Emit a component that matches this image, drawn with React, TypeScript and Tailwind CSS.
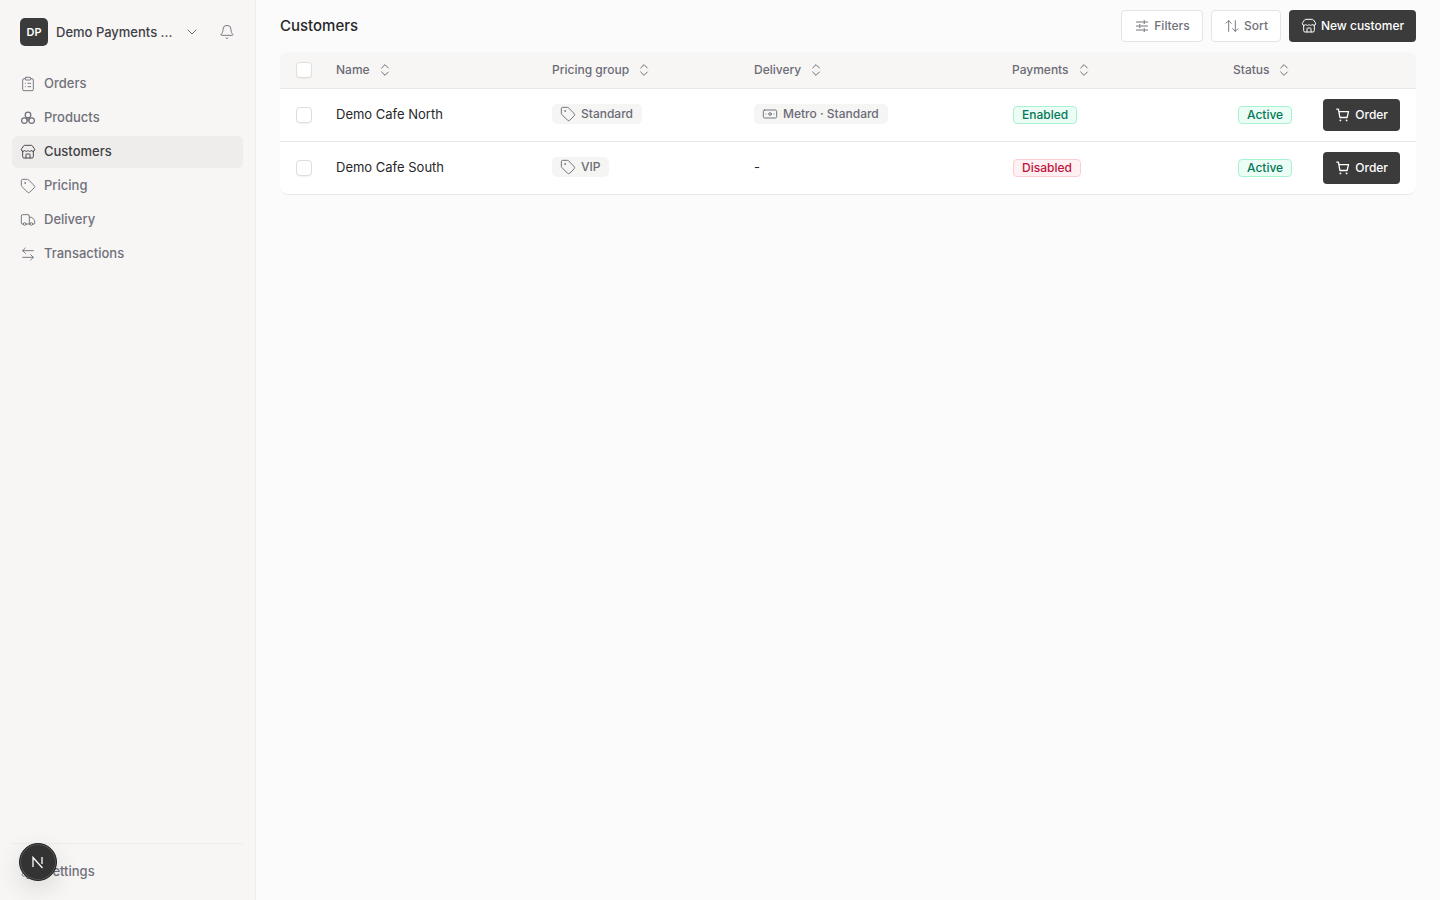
import React from "react";
import { ClipboardList, Store, Tag, Truck, ArrowLeftRight, Bell, ChevronDown, ArrowUpDown, Banknote, ChevronsUpDown, Settings } from "lucide-react";

function Products({ className }: { className?: string }) {
  return (
    <svg viewBox="0 0 16 16" fill="none" stroke="currentColor" strokeWidth="1.25" className={className}>
      <circle cx="8" cy="5" r="2.8" />
      <circle cx="4.4" cy="10.6" r="2.8" />
      <circle cx="11.6" cy="10.6" r="2.8" />
      <circle cx="8" cy="9" r="1.3" />
    </svg>
  );
}

function Cart() {
  return (
    <svg viewBox="0 0 16 16" fill="none" stroke="currentColor" strokeWidth="1.3" strokeLinecap="round" strokeLinejoin="round" className="w-4 h-4">
      <path d="M1.8 2.2h1.6l1.5 8.3h7.2l1.4-5.8H3.9" />
      <path d="M5.4 13.4h.01M11.6 13.4h.01" strokeWidth="1.8" />
    </svg>
  );
}

function Sliders() {
  return (
    <svg viewBox="0 0 16 16" fill="none" stroke="currentColor" strokeWidth="1.2" strokeLinecap="round" className="w-4 h-4">
      <path d="M2.5 4h6.5M11.5 4h2M2.5 8h2M7 8h6.5M2.5 12h6.5M11.5 12h2" />
      <path d="M10.2 2.6v2.8M5.8 6.6v2.8M10.2 10.6v2.8" />
    </svg>
  );
}

const nav = [
  { label: "Orders", Icon: ClipboardList },
  { label: "Products", Icon: Products },
  { label: "Customers", Icon: Store, active: true },
  { label: "Pricing", Icon: Tag },
  { label: "Delivery", Icon: Truck },
  { label: "Transactions", Icon: ArrowLeftRight },
];

const cols = "grid grid-cols-[56px_216px_202px_258px_221px_1fr] items-center";

function Sortable({ children }: { children: React.ReactNode }) {
  return (
    <div className="flex items-center gap-[6px] text-xs font-medium text-[#6b6b76]">
      <span>{children}</span>
      <ChevronsUpDown className="w-4 h-4 ml-px" strokeWidth={1.5} />
    </div>
  );
}

function Check() {
  return <div className="ml-4 w-4 h-4 rounded-[4px] border border-[#dededc] bg-white shadow-[0_1px_1px_rgba(0,0,0,0.05)]" />;
}

function Chip({ icon, children }: { icon: React.ReactNode; children: React.ReactNode }) {
  return (
    <span className="inline-flex items-center gap-[5px] h-5 -mt-[2px] pl-2 pr-[9px] rounded-[5px] bg-[#f5f5f4] text-xs font-medium text-[#6b6b76]">
      {icon}
      {children}
    </span>
  );
}

function Badge({ tone, children }: { tone: "green" | "red"; children: React.ReactNode }) {
  const cls = tone === "green"
    ? "bg-[#ecfdf5] border-[#a7f3d0] text-[#047857]"
    : "bg-[#fff1f2] border-[#fecdd3] text-[#be123c]";
  return <span className={`inline-flex items-center h-[18px] px-2 rounded-[4px] border text-xs font-medium ${cls}`}>{children}</span>;
}

function OrderButton() {
  return (
    <button className="flex items-center gap-1 h-8 px-3 rounded-[4px] bg-[#3b3b3b] text-white text-xs font-medium">
      <Cart />
      Order
    </button>
  );
}

function Row({ name, group, delivery, payment, last }: { name: string; group: string; delivery?: string; payment: "Enabled" | "Disabled"; last?: boolean }) {
  return (
    <div className={`${cols} h-[53px] bg-white border-b border-[#e8e8e6] ${last ? "rounded-b-[8px]" : ""}`}>
      <Check />
      <div className="text-[13px] text-[#27272a]">{name}</div>
      <div className="flex items-center"><Chip icon={<Tag className="w-4 h-4" strokeWidth={1.4} />}>{group}</Chip></div>
      <div className="flex items-center">
        {delivery
          ? <Chip icon={<Banknote className="w-4 h-4" strokeWidth={1.4} />}>{delivery}</Chip>
          : <span className="text-[13px] leading-5 -mt-[2px] text-[#27272a]">-</span>}
      </div>
      <div className="flex items-center pl-px"><Badge tone={payment === "Enabled" ? "green" : "red"}>{payment}</Badge></div>
      <div className="flex items-center justify-between pr-4 pl-[5px]">
        <Badge tone="green">Active</Badge>
        <OrderButton />
      </div>
    </div>
  );
}

export default function App() {
  return (
    <div className="h-[900px] w-[1440px] flex overflow-hidden bg-[#fbfbfb] font-['Inter',sans-serif] relative">
      <aside className="w-[256px] shrink-0 h-full bg-[#f7f6f5] border-r border-[#ececea] flex flex-col px-3">
        <div className="flex items-center h-7 mt-[18px] pl-2">
          <div className="w-7 h-7 shrink-0 rounded-[5px] bg-[#3b3b3b] text-white text-[11px] font-semibold flex items-center justify-center">DP</div>
          <span className="ml-2 pt-[2px] text-[13px] font-medium text-[#3f3f46] w-[118px] whitespace-nowrap">Demo Payments ...</span>
          <ChevronDown className="ml-[10px] w-4 h-4 shrink-0 text-[#6b6b76]" strokeWidth={1.5} />
          <Bell className="ml-[19px] w-4 h-4 shrink-0 text-[#71717a]" strokeWidth={1.4} />
        </div>
        <nav className="mt-[22px] flex flex-col gap-[2px]">
          {nav.map(({ label, Icon, active }) => (
            <div key={label} className={`h-8 rounded-[6px] flex items-center gap-2 pl-2 text-[13px] font-medium ${active ? "bg-[#eeedeb] text-[#3f3f46]" : "text-[#71717a]"}`}>
              <Icon className="w-4 h-4" strokeWidth={1.4} />
              {label}
            </div>
          ))}
        </nav>
        <div className="mt-auto mb-[12px] border-t border-[#ececea] pt-[12px]">
          <div className="h-8 flex items-center gap-2 pl-2 text-[13px] font-medium text-[#71717a]">
            <Settings className="w-4 h-4" strokeWidth={1.4} />
            Settings
          </div>
        </div>
      </aside>
      <main className="flex-1 px-6">
        <header className="h-[52px] flex items-center justify-between">
          <h1 className="text-[15px] font-medium text-[#27272a]">Customers</h1>
          <div className="flex items-center gap-2">
            <button className="h-8 w-[82px] rounded-[4px] border border-[#e4e4e2] bg-white flex items-center justify-center gap-1 text-xs font-medium text-[#71717a]">
              <Sliders />
              Filters
            </button>
            <button className="h-8 w-[70px] rounded-[4px] border border-[#e4e4e2] bg-white flex items-center justify-center gap-1 text-xs font-medium text-[#71717a]">
              <ArrowUpDown className="w-4 h-4" strokeWidth={1.4} />
              Sort
            </button>
            <button className="h-8 w-[127px] rounded-[4px] bg-[#3b3b3b] flex items-center justify-center gap-1 text-xs font-medium text-white">
              <Store className="w-4 h-4" strokeWidth={1.5} />
              New customer
            </button>
          </div>
        </header>
        <div>
          <div className={`${cols} h-[37px] bg-[#f7f6f5] border-b border-[#e8e8e6] rounded-t-[8px]`}>
            <Check />
            <Sortable>Name</Sortable>
            <Sortable>Pricing group</Sortable>
            <Sortable>Delivery</Sortable>
            <Sortable>Payments</Sortable>
            <Sortable>Status</Sortable>
          </div>
          <Row name="Demo Cafe North" group="Standard" delivery="Metro · Standard" payment="Enabled" />
          <Row name="Demo Cafe South" group="VIP" payment="Disabled" last />
        </div>
      </main>
      <div className="absolute left-[19px] top-[843px] w-[38px] h-[38px] rounded-full bg-[#333] border border-[#222] shadow-[0_8px_24px_rgba(0,0,0,0.12),inset_0_0_0_1px_#555] flex items-center justify-center">
        <svg viewBox="0 0 16 16" className="w-4 h-4" fill="none" stroke="white" strokeWidth="1.3">
          <path d="M3 13V3.5L12.5 14" />
          <path d="M12 3v7" />
        </svg>
      </div>
    </div>
  );
}
